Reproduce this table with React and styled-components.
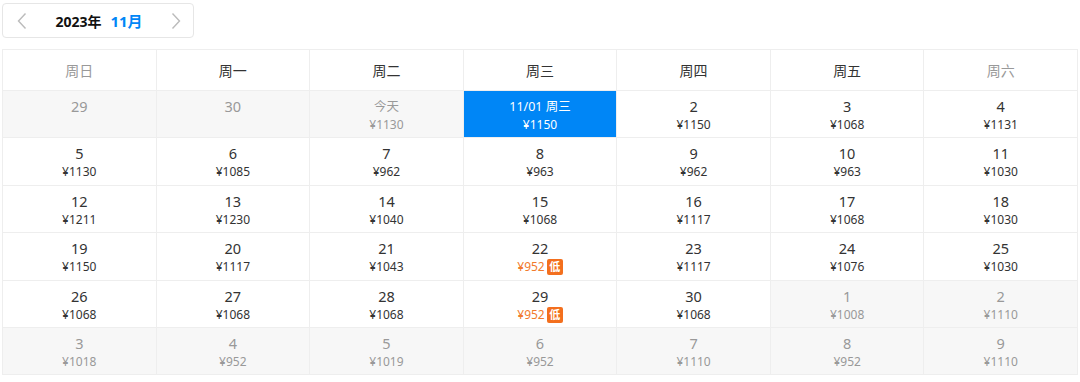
import React from 'react';
import styled, { createGlobalStyle } from 'styled-components';

const Global = createGlobalStyle`
  body {
    margin: 0;
    background: #fff;
    font-family: "Noto Sans", "Noto Sans CJK SC", sans-serif;
    color: #333;
  }
`

const Page = styled.div`
  padding: 3px 2px 0 2px;
`

const MonthBar = styled.div`
  display: flex;
  align-items: center;
  width: 192px;
  height: 35px;
  box-sizing: border-box;
  border: 1px solid #e6e6e6;
  border-radius: 4px;
  padding: 0 10px 0 12px;
`

const Arrow = styled.button`
  border: 0;
  background: none;
  padding: 0;
  width: 14px;
  height: 20px;
  display: flex;
  align-items: center;
  justify-content: center;
  color: #bbb;
  cursor: pointer;
`

const Title = styled.div`
  flex: 1;
  display: flex;
  justify-content: center;
  align-items: baseline;
  gap: 9px;
  font-size: 14px;
  font-weight: 700;
  color: #111;
`

const Month = styled.span`
  color: #0086f6;
  font-size: 15px;
`

const Grid = styled.div`
  margin-top: 11px;
  display: grid;
  grid-template-columns: repeat(7, 1fr);
  border-top: 1px solid #eee;
  border-left: 1px solid #eee;
`

const Head = styled.div`
  height: 40px;
  display: flex;
  align-items: center;
  justify-content: center;
  font-size: 14px;
  color: ${p => (p.$weekend ? '#999' : '#333')};
  border-right: 1px solid #eee;
  border-bottom: 1px solid #eee;
`

const Cell = styled.div`
  height: 47.4px;
  box-sizing: border-box;
  padding-top: 6px;
  display: flex;
  flex-direction: column;
  align-items: center;
  border-right: 1px solid #eee;
  border-bottom: 1px solid #eee;
  background: ${p => (p.$active ? '#0086f6' : p.$muted ? '#f7f7f7' : '#fff')};
  color: ${p => (p.$active ? '#fff' : p.$muted ? '#999' : '#333')};
`

const Day = styled.div`
  font-size: ${p => (p.$small ? '12.5px' : '14.5px')};
  line-height: 19px;
`

const Price = styled.div`
  display: flex;
  align-items: center;
  gap: 2px;
  font-size: 12px;
  line-height: 18px;
  color: ${p => (p.$low ? '#f27a2c' : 'inherit')};
`

const LowTag = styled.span`
  display: inline-flex;
  align-items: center;
  justify-content: center;
  width: 16px;
  height: 16px;
  border-radius: 2px;
  background: #f36f1e;
  color: #fff;
  font-size: 11px;
  font-weight: 700;
`

const Chevron = ({ dir }) => (
  <svg width="10" height="18" viewBox="0 0 10 18" fill="none" stroke="currentColor" strokeWidth="1.4">
    {dir === 'left' ? <path d="M8.5 1.5 1.5 9l7 7.5" /> : <path d="M1.5 1.5 8.5 9l-7 7.5" />}
  </svg>
)

const weekdays = ['周日', '周一', '周二', '周三', '周四', '周五', '周六']

const days = [
  ['29', '', 'm'], ['30', '', 'm'], ['今天', '1130', 'm', true], ['11/01 周三', '1150', 'a'], ['2', '1150'], ['3', '1068'], ['4', '1131'],
  ['5', '1130'], ['6', '1085'], ['7', '962'], ['8', '963'], ['9', '962'], ['10', '963'], ['11', '1030'],
  ['12', '1211'], ['13', '1230'], ['14', '1040'], ['15', '1068'], ['16', '1117'], ['17', '1068'], ['18', '1030'],
  ['19', '1150'], ['20', '1117'], ['21', '1043'], ['22', '952', 'l'], ['23', '1117'], ['24', '1076'], ['25', '1030'],
  ['26', '1068'], ['27', '1068'], ['28', '1068'], ['29', '952', 'l'], ['30', '1068'], ['1', '1008', 'm'], ['2', '1110', 'm'],
  ['3', '1018', 'm'], ['4', '952', 'm'], ['5', '1019', 'm'], ['6', '952', 'm'], ['7', '1110', 'm'], ['8', '952', 'm'], ['9', '1110', 'm'],
]

export default function App() {
  return (
    <Page>
      <Global />
      <MonthBar>
        <Arrow><Chevron dir="left" /></Arrow>
        <Title>2023年<Month>11月</Month></Title>
        <Arrow><Chevron dir="right" /></Arrow>
      </MonthBar>
      <Grid>
        {weekdays.map((w, i) => (
          <Head key={w} $weekend={i === 0 || i === 6}>{w}</Head>
        ))}
        {days.map(([d, p, kind, small], i) => (
          <Cell key={i} $muted={kind === 'm'} $active={kind === 'a'}>
            <Day $small={small || kind === 'a'}>{d}</Day>
            {p && (
              <Price $low={kind === 'l'}>
                ¥{p}
                {kind === 'l' && <LowTag>低</LowTag>}
              </Price>
            )}
          </Cell>
        ))}
      </Grid>
    </Page>
  )
}
